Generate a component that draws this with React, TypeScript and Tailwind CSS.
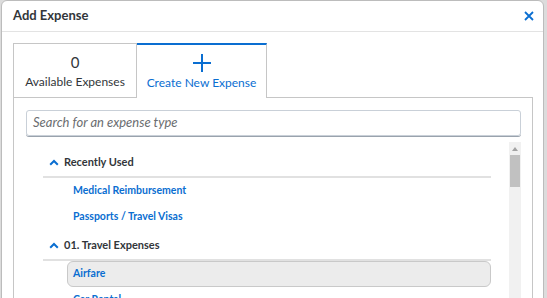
import { ReactNode } from 'react'

const FONT = { fontFamily: 'Lato, "Noto Sans", sans-serif' }

function ChevronUp() {
  return (
    <svg width="10" height="7" viewBox="0 0 10 7" className="shrink-0">
      <path d="M1.2 5.8 L5 2 L8.8 5.8" fill="none" stroke="#0a6ed1" strokeWidth="2" />
    </svg>
  )
}

function GroupHeader({ children }: { children: ReactNode }) {
  return (
    <div className="flex h-[31px] items-center gap-[5px] border-b-2 border-[#e1e1e1] pl-[6px] pt-[2px] text-[11px] font-bold text-[#32363a]">
      <ChevronUp />
      <span>{children}</span>
    </div>
  )
}

function Item({ label, selected }: { label: string; selected?: boolean }) {
  if (selected) {
    return (
      <div className="ml-[24px] flex h-[26px] items-center rounded-[6px] border border-[#c9c9c9] bg-[#ececec] pl-[5px] text-[10.5px] font-bold text-[#0a6ed1]">
        {label}
      </div>
    )
  }
  return (
    <div className="flex h-[26px] items-center pl-[30px] text-[10.5px] font-bold text-[#0a6ed1]">{label}</div>
  )
}

export default function App() {
  return (
    <div className="h-[298px] w-[547px] overflow-hidden bg-[#dcdcdc]" style={FONT}>
      <div className="ml-px h-[320px] w-[543px] rounded-t-[6px] border border-[#bcbcbc] bg-white">
        {/* Header */}
        <div className="flex h-[31px] items-center justify-between border-b border-[#e3e3e3] pl-[11px] pr-[9px]">
          <span className="text-[13px] font-bold text-[#32363a]">Add Expense</span>
          <svg width="10" height="10" viewBox="0 0 10 10">
            <path d="M1 1 L9 9 M9 1 L1 9" stroke="#0a6ed1" strokeWidth="1.8" />
          </svg>
        </div>

        <div className="pl-[11px] pr-[10px] pt-[11px]">
          {/* Tabs */}
          <div className="flex h-[55px]">
            <div className="flex w-[124px] flex-col items-center justify-center border border-[#c6c6c6] bg-white">
              <span className="text-[15px] leading-[20px] text-[#32363a]">0</span>
              <span className="mt-[3px] text-[12px] leading-[14px] text-[#32363a]">Available Expenses</span>
            </div>
            <div className="flex w-[130px] flex-col items-center justify-center border-r border-t-2 border-r-[#c6c6c6] border-t-[#0a6ed1]">
              <svg width="18" height="18" viewBox="0 0 18 18">
                <path d="M9 0 V18 M0 9 H18" stroke="#0a6ed1" strokeWidth="2" />
              </svg>
              <span className="mt-[4px] text-[12px] leading-[14px] text-[#0a6ed1]">Create New Expense</span>
            </div>
            <div className="flex-1 border-b border-[#c6c6c6]" />
          </div>

          {/* Panel */}
          <div className="h-[260px] border-x border-[#c6c6c6] pl-[12px] pr-[11px] pt-[12px]">
            <div className="flex h-[26px] items-center rounded-[3px] border border-[#c9d0d8] px-[6px] shadow-[0_1px_0_#9aa3ad]">
              <span className="text-[13px] italic text-[#6a6d70]">Search for an expense type</span>
            </div>

            <div className="mt-[6px] flex">
              <div className="flex-1 pl-[17px] pr-[18px] pt-[5px]">
                <GroupHeader>Recently Used</GroupHeader>
                <Item label="Medical Reimbursement" />
                <Item label="Passports / Travel Visas" />
                <GroupHeader>01. Travel Expenses</GroupHeader>
                <Item label="Airfare" selected />
                <Item label="Car Rental" />
              </div>
              {/* Scrollbar */}
              <div className="flex h-[200px] w-[12px] flex-col items-center bg-[#f1f1f1]">
                <svg width="6" height="4" viewBox="0 0 6 4" className="mt-[5px]">
                  <path d="M0 4 L3 0 L6 4 Z" fill="#a3a3a3" />
                </svg>
                <div className="mt-[4px] h-[32px] w-[10px] bg-[#c1c1c1]" />
              </div>
            </div>
          </div>
        </div>
      </div>
    </div>
  )
}
